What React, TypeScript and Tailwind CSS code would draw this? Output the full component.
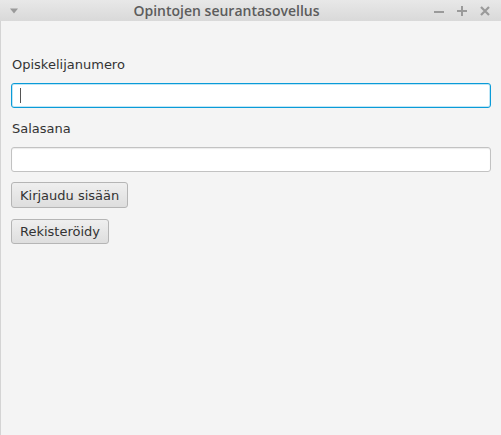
import React from 'react';

export default function App() {
  return (
    <div className="flex h-[435px] w-[501px] flex-col overflow-hidden bg-[#f4f4f4] font-['DejaVu_Sans',sans-serif] text-[13px] text-[#333]">
      {/* title bar */}
      <div className="flex h-[21px] shrink-0 items-center bg-gradient-to-b from-[#e8e8e8] to-[#d9d9d9] px-[8px]">
        <svg width="10" height="6" viewBox="0 0 10 6" className="ml-[1px] mt-[1px]">
          <path d="M1 0.5h8L5 5.5z" fill="#9a9a9a" />
        </svg>
        <div className="flex-1 text-center font-['Open_Sans',sans-serif] text-[14px] font-semibold leading-none text-[#5c5c5c]">
          Opintojen seurantasovellus
        </div>
        <div className="flex items-center gap-[13px] pr-[3px]">
          <svg width="10" height="10" viewBox="0 0 10 10">
            <rect x="0" y="5" width="10" height="2" fill="#9a9a9a" />
          </svg>
          <svg width="10" height="10" viewBox="0 0 10 10">
            <rect x="0" y="4" width="10" height="2" fill="#9a9a9a" />
            <rect x="4" y="0" width="2" height="10" fill="#9a9a9a" />
          </svg>
          <svg width="10" height="10" viewBox="0 0 10 10">
            <path d="M1 1l8 8M9 1l-8 8" stroke="#9a9a9a" strokeWidth="2.2" />
          </svg>
        </div>
      </div>

      {/* content */}
      <div className="flex flex-1 flex-col border-l border-[#d4d4d4] pl-[10px] pr-[10px] pt-[36px]">
        <label className="pl-[1px] leading-[16px]">Opiskelijanumero</label>
        <div className="mt-[10px] flex h-[25px] items-center rounded-[3px] border border-[#0a9bd8] bg-white pl-[8px] shadow-[0_0_0_1px_#bfe6f6_inset]">
          <div className="h-[15px] w-[1px] bg-[#555]" />
        </div>
        <label className="mt-[13px] pl-[1px] leading-[16px]">Salasana</label>
        <div className="mt-[10px] h-[25px] rounded-[3px] border border-[#c2c2c2] bg-white shadow-[inset_0_1px_1px_#ececec]" />
        <div className="mt-[10px] flex flex-col items-start gap-[11px]">
          <button className="h-[26px] rounded-[3px] border border-[#b5b5b5] bg-gradient-to-b from-[#efefef] to-[#dedede] px-[8px] leading-none text-[#333]">
            Kirjaudu sisään
          </button>
          <button className="h-[25px] rounded-[3px] border border-[#b5b5b5] bg-gradient-to-b from-[#efefef] to-[#dedede] px-[8px] leading-none text-[#333]">
            Rekisteröidy
          </button>
        </div>
      </div>
    </div>
  );
}
